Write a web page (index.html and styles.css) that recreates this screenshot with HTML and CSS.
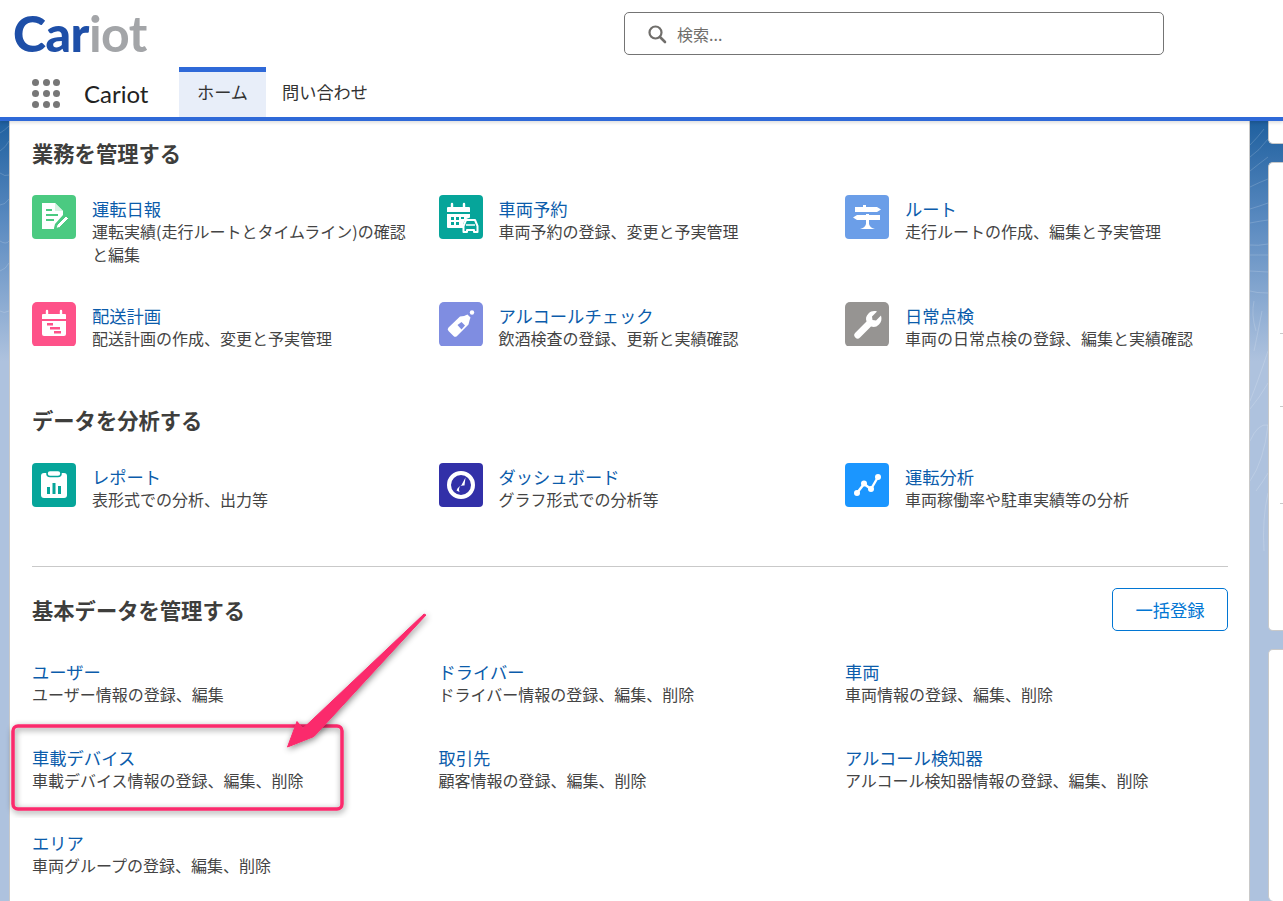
FILE: index.html
```html
<!DOCTYPE html>
<html lang="ja">
<head>
<meta charset="utf-8">
<title>Cariot</title>
<link rel="stylesheet" href="styles.css">
</head>
<body>
<header class="header">
  <div class="brandbar">
    <div class="logo"><span class="logo-car">Car</span><span class="logo-iot">iot</span></div>
    <div class="search">
      <svg class="search-icon" viewBox="0 0 20 20"><circle cx="8.5" cy="8.5" r="6" fill="none" stroke="#706e6b" stroke-width="2.2"/><path d="M13 13l5 5" stroke="#706e6b" stroke-width="2.6" stroke-linecap="round"/></svg>
      <span class="search-text">検索...</span>
    </div>
  </div>
  <nav class="nav">
    <div class="apps">
      <i></i><i></i><i></i><i></i><i></i><i></i><i></i><i></i><i></i>
    </div>
    <div class="app-name">Cariot</div>
    <div class="tab tab-active">ホーム</div>
    <div class="tab">問い合わせ</div>
  </nav>
</header>

<div class="stage">
  <svg class="contours" viewBox="0 0 1283 780" preserveAspectRatio="none">
    <g fill="none" stroke="#fff" stroke-opacity=".17" stroke-width="1">
      <path d="M1250 24q8-8 14-16M1250 36q9-6 18-18M1250 50q10-8 18-14M1250 66q10-5 18-8M1250 88q10-3 18-6M1250 102q10-2 18-3M1250 124q8 1 18-1M1250 134q8 0 18 0M1250 150l18 1M1250 170q6 2 18 2"/>
      <path d="M1254 180q-3 14 2 30M1262 190q-5 26-8 40M1268 230q-10 30-18 50M1268 262q-8 14-18 26M1250 320q8-18 18-16q-4 36-18 56M1268 352q-6 10-12 18M1268 372q-6 26-4 58"/>
      <path d="M0 12q5-3 9-7M0 30q6-4 9-10M0 52q5 4 9 2M0 84q5 0 9-6M0 120q6 4 9 0M0 150q6-2 9-8M0 190q4 3 9 0"/>
    </g>
  </svg>
  <div class="layout">
    <main class="card">
      <section class="section">
        <h2 class="heading">業務を管理する</h2>
        <div class="grid grid-tasks">
          <a class="item">
            <svg class="icon" viewBox="0 0 44 44"><rect width="44" height="44" rx="4" fill="#4bca81"/><path d="M10 8h13l8 8v4l-8 9 0 0-1 4v1H10z" fill="#fff"/><path d="M23 8l8 8h-8z" fill="#d8f3e3"/><path d="M14 15h6M14 20h12M14 25h8" stroke="#4bca81" stroke-width="2"/><path d="M25 30l9-9 2.5 2.5-9 9-3.5 1z" fill="#fff" stroke="#4bca81" stroke-width="1"/></svg>
            <div class="text"><div class="title">運転日報</div><div class="desc">運転実績(走行ルートとタイムライン)の確認と編集</div></div>
          </a>
          <a class="item">
            <svg class="icon" viewBox="0 0 44 44"><rect width="44" height="44" rx="4" fill="#06a59a"/><path d="M9 12h21a1 1 0 0 1 1 1v4H8v-4a1 1 0 0 1 1-1z" fill="#fff"/><path d="M13 9v5M25 9v5" stroke="#fff" stroke-width="2.4" stroke-linecap="round"/><path d="M8 19h23v3.500a9 9 0 0 0-7 10.500H9a1 1 0 0 1-1-1z" fill="#fff"/><path d="M12 22h3v3h-3zM17 22h3v3h-3zM22 22h3v2h-3zM12 27h3v3h-3zM17 27h3v3h-3z" fill="#06a59a"/><path d="M24.500 37v-6l2.500-6h9l2.500 6v6h-3.500v-2h-7v2z" fill="#06a59a" stroke="#fff" stroke-width="2" stroke-linejoin="round"/><path d="M27 30h9" stroke="#fff" stroke-width="1.500"/></svg>
            <div class="text"><div class="title">車両予約</div><div class="desc">車両予約の登録、変更と予実管理</div></div>
          </a>
          <a class="item">
            <svg class="icon" viewBox="0 0 44 44"><rect width="44" height="44" rx="4" fill="#6b9ee8"/><path d="M10 12h8v-2h3v2h11l4 2.500-4 2.500H10z" fill="#fff"/><path d="M12 20h9v-1h3v1h11v5H24v5h-3v-5h-9l-4-2.500z" fill="#fff"/><path d="M15 34q5-1 6-5h3q1 4 6 5z" fill="#fff"/></svg>
            <div class="text"><div class="title">ルート</div><div class="desc">走行ルートの作成、編集と予実管理</div></div>
          </a>
          <a class="item">
            <svg class="icon" viewBox="0 0 44 44"><rect width="44" height="45" rx="5" fill="#fe5289"/><path d="M11 12h22a1 1 0 0 1 1 1v4H10v-4a1 1 0 0 1 1-1z" fill="#fff"/><path d="M15 9v4M29 9v4" stroke="#fff" stroke-width="2.400" stroke-linecap="round"/><path d="M10 19h24v13a2 2 0 0 1-2 2H12a2 2 0 0 1-2-2z" fill="#fff"/><path d="M15 21h6v2.500h-6zM18 25h10v2.500H18zM22 29h7v2.500h-7z" fill="#fe5289"/></svg>
            <div class="text"><div class="title">配送計画</div><div class="desc">配送計画の作成、変更と予実管理</div></div>
          </a>
          <a class="item">
            <svg class="icon" viewBox="0 0 44 44"><rect width="44" height="45" rx="5" fill="#7f8de1"/><path d="M28.500 12.500l3 3-1 3-1 4L18 34a2.500 2.500 0 0 1-3.500 0l-5-5a2.500 2.500 0 0 1 0-3.500L21 14.500l4-.500z" fill="#fff"/><path d="M18.500 23l4-3 3.500 3.500-3.500 4z" fill="#7f8de1"/><circle cx="33" cy="10.500" r="2.200" fill="#fff"/></svg>
            <div class="text"><div class="title">アルコールチェック</div><div class="desc">飲酒検査の登録、更新と実績確認</div></div>
          </a>
          <a class="item">
            <svg class="icon" viewBox="0 0 44 44"><rect width="44" height="45" rx="5" fill="#969492"/><path d="M32 9.500l-5 5 .5 3.500 3.500.5 5-5c1 3.500.5 6.500-2 9s-5 3-8 2L15 35.500a3.300 3.300 0 0 1-4.700-4.700L21.500 19.500c-1-3-.5-5.500 2-8s5.500-3 8.500-2z" fill="#fff"/></svg>
            <div class="text"><div class="title">日常点検</div><div class="desc">車両の日常点検の登録、編集と実績確認</div></div>
          </a>
        </div>
      </section>

      <section class="section section-analysis">
        <h2 class="heading">データを分析する</h2>
        <div class="grid">
          <a class="item">
            <svg class="icon" viewBox="0 0 44 44"><rect width="44" height="44" rx="4" fill="#06a59a"/><path d="M12 10h20a3 3 0 0 1 3 3v19a3 3 0 0 1-3 3H12a3 3 0 0 1-3-3V13a3 3 0 0 1 3-3z" fill="#fff"/><rect x="15" y="7.500" width="14" height="6" rx="3" fill="#fff" stroke="#06a59a" stroke-width="1.600"/><path d="M15 24h3v7h-3zM20.500 20h3v11h-3zM26 23h3v8h-3z" fill="#06a59a"/></svg>
            <div class="text"><div class="title">レポート</div><div class="desc">表形式での分析、出力等</div></div>
          </a>
          <a class="item">
            <svg class="icon" viewBox="0 0 44 44"><rect width="44" height="44" rx="4" fill="#3230a8"/><circle cx="22" cy="22" r="12" fill="none" stroke="#fff" stroke-width="4"/><path d="M17.500 27.500a7 7 0 0 1 8-5l1-8-4 7.500a6 6 0 0 0-2 7z" fill="#fff"/></svg>
            <div class="text"><div class="title">ダッシュボード</div><div class="desc">グラフ形式での分析等</div></div>
          </a>
          <a class="item">
            <svg class="icon" viewBox="0 0 44 44"><rect width="44" height="44" rx="4" fill="#1b96ff"/><path d="M12 30l7-9 7 5 7-12" fill="none" stroke="#fff" stroke-width="2.400"/><circle cx="12" cy="30" r="3" fill="#fff"/><circle cx="19" cy="20.500" r="3" fill="#fff"/><circle cx="26" cy="26" r="3" fill="#fff"/><circle cx="33" cy="14" r="3" fill="#fff"/></svg>
            <div class="text"><div class="title">運転分析</div><div class="desc">車両稼働率や駐車実績等の分析</div></div>
          </a>
        </div>
      </section>

      <hr class="rule">

      <section class="section">
        <div class="heading-row">
          <h2 class="heading">基本データを管理する</h2>
          <button class="btn">一括登録</button>
        </div>
        <div class="grid grid-master">
          <a class="entry"><div class="title">ユーザー</div><div class="desc">ユーザー情報の登録、編集</div></a>
          <a class="entry"><div class="title">ドライバー</div><div class="desc">ドライバー情報の登録、編集、削除</div></a>
          <a class="entry"><div class="title">車両</div><div class="desc">車両情報の登録、編集、削除</div></a>
          <a class="entry"><div class="title">車載デバイス</div><div class="desc">車載デバイス情報の登録、編集、削除</div></a>
          <a class="entry"><div class="title">取引先</div><div class="desc">顧客情報の登録、編集、削除</div></a>
          <a class="entry"><div class="title">アルコール検知器</div><div class="desc">アルコール検知器情報の登録、編集、削除</div></a>
          <a class="entry"><div class="title">エリア</div><div class="desc">車両グループの登録、編集、削除</div></a>
        </div>
      </section>
    </main>
    <aside class="side">
      <div class="side-card side-card-top"></div>
      <div class="side-card side-card-mid">
        <div class="side-rule"></div>
        <div class="side-rule"></div>
        <div class="side-rule"></div>
      </div>
      <div class="side-card side-card-bottom"></div>
    </aside>
  </div>
</div>

<svg class="annotation" viewBox="0 0 1283 901">
  <defs>
    <filter id="soft" x="-10%" y="-10%" width="120%" height="120%"><feDropShadow dx="1" dy="2" stdDeviation="3" flood-color="#000" flood-opacity=".45"/></filter>
  </defs>
  <rect x="13" y="726" width="329" height="83" rx="5" fill="none" stroke="#fb2a6c" stroke-width="3.500" filter="url(#soft)"/>
  <path d="M426 615L314 736.500 287.500 747 297 721.500 303 728.500 424 614z" fill="#fb2a6c" stroke="#fb2a6c" stroke-width="1" stroke-linejoin="round" filter="url(#soft)"/>
</svg>
</body>
</html>
```
FILE: styles.css
```css
* { box-sizing: border-box; }
html, body { margin: 0; height: 901px; overflow: hidden; }
body {
  position: relative;
  font-family: "Noto Sans CJK JP", "Noto Sans", sans-serif;
  color: #444;
  background: #aec2de;
}

.header { position: relative; z-index: 2; background: #fff; box-shadow: 0 2px 3px rgba(0,0,0,.12); }
.brandbar { display: flex; align-items: flex-start; height: 67px; padding-left: 13px; }
.logo {
  width: 611px; margin-top: 3px;
  font-family: "Lato", sans-serif; font-weight: 900; font-size: 50px; line-height: 60px; letter-spacing: -.5px;
}
.logo-car { color: #1e4fa8; }
.logo-iot { color: #a3a5a8; font-weight: 700; }
.search {
  display: flex; align-items: center;
  width: 540px; height: 43px; margin-top: 12px; padding-left: 22px;
  background: #fff; border: 1px solid #747474; border-radius: 5px;
}
.search-icon { width: 20px; height: 20px; margin-right: 10px; }
.search-text { font-size: 16px; color: #706e6b; }

.nav { display: flex; height: 54px; border-bottom: 4px solid #2f69d8; padding-left: 32px; }
.apps { display: grid; grid-template-columns: repeat(3, 7px); grid-auto-rows: 7px; gap: 4px 3.500px; align-content: start; margin-top: 12px; width: 52px; }
.apps i { background: #777; border-radius: 50%; }
.app-name { width: 95px; padding-top: 9px; font-family: "Lato", "Noto Sans", sans-serif; font-size: 24px; line-height: 36px; color: #222; }
.tab { padding: 12px 0 0; font-size: 17.200px; line-height: 26px; color: #333; margin-left: 16px; }
.tab-active {
  width: 87px; margin-left: 0; padding-top: 7px; text-align: center;
  background: #e8eef9; border-top: 5px solid #2f69d8; margin-right: 0;
}

.stage {
  position: relative; height: 780px;
  background: linear-gradient(180deg, #1f609f 0, #5a8ac0 100px, #aec2de 240px);
}
.contours { position: absolute; inset: 0; width: 100%; height: 100%; }
.layout { position: relative; display: flex; gap: 18px; height: 100%; padding-left: 9px; }
.card {
  width: 1241px; height: 800px; padding: 17px 21px 0 22px;
  background: #fff; border-left: 1px solid #c9c9c9; border-right: 1px solid #c9c9c9;
}

.heading { margin: 0; font-size: 21.300px; line-height: 30px; font-weight: 700; color: #3e3e3c; }
.section-analysis { margin-top: 55px; }

.grid { display: grid; grid-template-columns: 406.500px 406.500px 1fr; margin-right: -21px; }
.grid-tasks { row-gap: 36px; margin-top: 27px; }
.section-analysis .grid { margin-top: 28px; }
.grid-master { margin-top: 29px; row-gap: 39.500px; }

.item { display: flex; gap: 16px; }
.icon { flex: none; width: 44px; height: 44px; }
.text { padding: 2px 20px 0 0; }
.title { font-size: 17.300px; line-height: 23px; color: #0b5cab; }
.desc { font-size: 16px; line-height: 23px; color: #444; }

.rule { margin: 55px 0 21px; border: 0; border-top: 1px solid #c9c9c9; }
.heading-row { display: flex; justify-content: space-between; align-items: center; }
.btn {
  width: 116px; height: 43px; padding: 0;
  font-family: inherit; font-size: 17.300px; color: #0176d3;
  background: #fff; border: 1px solid #0176d3; border-radius: 5px;
}

.side { flex: 1; display: flex; flex-direction: column; gap: 18px; margin-top: -20px; }
.side-card { background: #fff; border: 1px solid #c9c9c9; border-right: 0; border-radius: 5px 0 0 5px; }
.side-card-top { height: 43px; }
.side-card-mid { height: 469px; padding-top: 170px; display: flex; flex-direction: column; }
.side-card-bottom { flex: 1; border-bottom: 0; }
.side-rule { height: 1px; background: #c9c9c9; margin-left: 11px; margin-bottom: 72px; }
.side-rule + .side-rule { margin-bottom: 96px; }

.annotation { position: absolute; left: 0; top: 0; width: 1283px; height: 901px; z-index: 3; pointer-events: none; }
```
